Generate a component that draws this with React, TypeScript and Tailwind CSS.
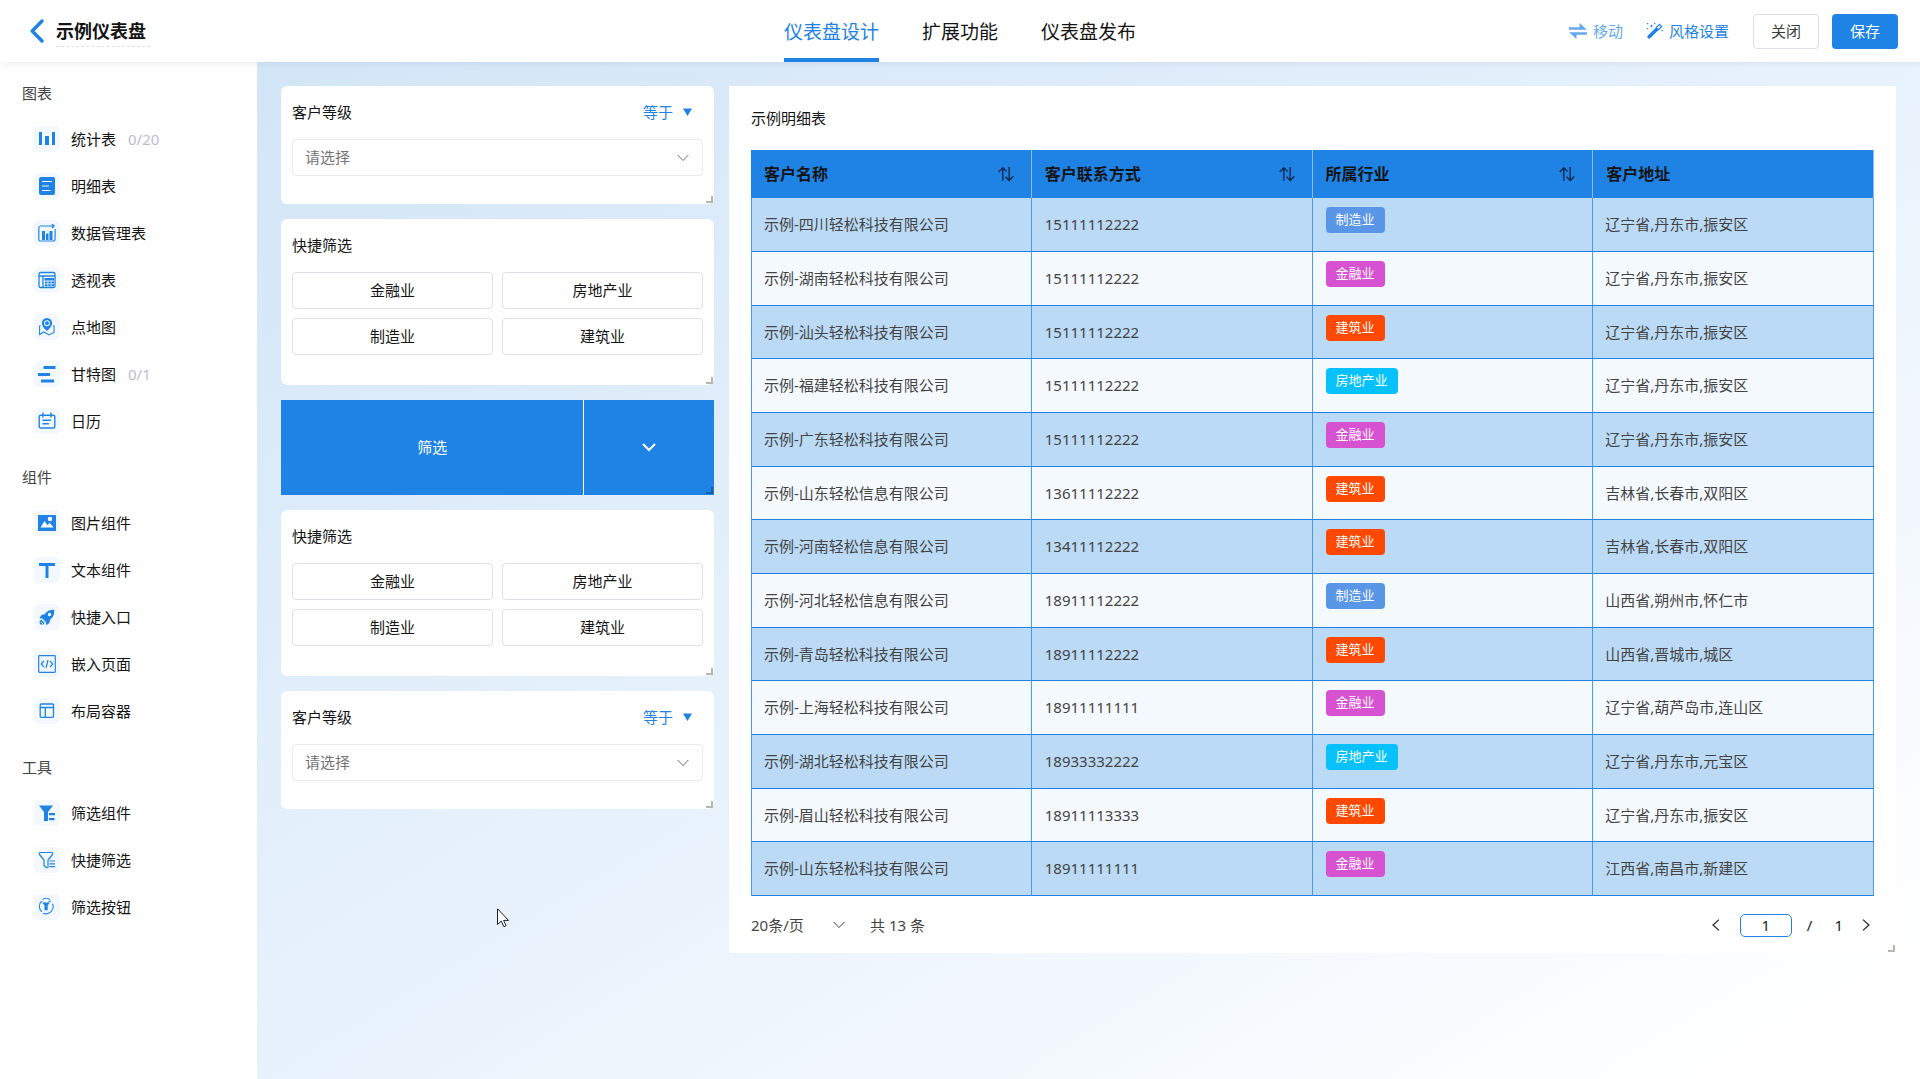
import React from 'react';

const svgProps = {
  viewBox: '0 0 18 18',
  fill: 'none',
  className: 'size-[18px]',
  'aria-hidden': true,
} as const;

const StatIcon = () => (
  <svg {...svgProps}>
    <path fill="currentColor" d="M1 2h3v13H1zM7 6h4v9H7zM14 2h3v13h-3z" />
  </svg>
);

const DetailIcon = () => (
  <svg {...svgProps}>
    <rect x="1" y="0" width="16" height="18" rx="2" fill="currentColor" />
    <path stroke="#fff" strokeWidth="1.2" strokeLinecap="round" d="M4.5 4.5h9M4.5 9h6M4.5 13.5h7.5" />
  </svg>
);

const DataIcon = () => (
  <svg {...svgProps} stroke="currentColor" strokeWidth="1.2">
    <path d="M12.5 2H2.5A1.8 1.8 0 0 0 .8 3.800v11.400A1.800 1.800 0 0 0 2.600 17h12.800a1.800 1.800 0 0 0 1.700-1.800V5" />
    <path d="M12 2h4M13.800-.2 16.200 2l-2.400 2.200" />
    <path fill="currentColor" stroke="none" d="M4 7h3v9H4zM8 9.500h2.500V16H8zM11.500 7h3v9h-3z" />
  </svg>
);

const PivotIcon = () => (
  <svg {...svgProps} stroke="currentColor" strokeWidth="1.3">
    <rect x="1" y="1.500" width="16" height="15" rx="1.500" />
    <path d="M1 5h16M5 5v11" />
    <path fill="currentColor" stroke="none" d="M6.500 7h9.500v2.500H6.500zM7 10.500h2.500v2H7zM10.300 10.500h2.500v2h-2.500zM13.500 10.500H16v2h-2.500zM7 13.300h2.500v1.900H7zM10.300 13.300h2.500v1.900h-2.500zM13.500 13.300H16v1.900h-2.500z" />
  </svg>
);

const MapIcon = () => (
  <svg {...svgProps}>
    <path fill="currentColor" fillRule="evenodd" d="M9 0a5.200 5.200 0 0 1 5.200 5.200C14.200 8.500 9 13 9 13S3.800 8.500 3.800 5.200A5.200 5.200 0 0 1 9 0zm0 2.200a3 3 0 1 0 0 6 3 3 0 0 0 0-6z" />
    <circle cx="9" cy="5.200" r="1.900" fill="currentColor" />
    <path stroke="currentColor" strokeWidth="1.100" d="M2.500 7.500 1.600 8v8.500L5.800 14l5.200 3 5-2.500V7.800l-1 .2" />
  </svg>
);

const GanttIcon = () => (
  <svg {...svgProps}>
    <path fill="currentColor" d="M5.500 1h12v3h-12zM0 8h12v3H0zM3 14.500h13v3H3z" />
  </svg>
);

const CalendarIcon = () => (
  <svg {...svgProps} stroke="currentColor" strokeWidth="1.400" strokeLinecap="round">
    <rect x="1.200" y="3.200" width="15.600" height="12.800" rx="1.600" />
    <path d="M5 1v4M13 1v4M5 8.200h7.500M5 11.800h5.500" />
  </svg>
);

const ImageIcon = () => (
  <svg {...svgProps}>
    <path fill="currentColor" d="M0 1h18v16H0z" />
    <path fill="#fff" d="m2.500 13.500 4-6.500 3 4.200 2.200-2.400 3.800 4.700z" />
    <circle cx="12" cy="5" r="2.200" fill="#fff" />
  </svg>
);

const TextIcon = () => (
  <svg {...svgProps}>
    <path fill="currentColor" d="M1 2h16v3h-6.500v12h-3V5H1z" />
  </svg>
);

const RocketIcon = () => (
  <svg {...svgProps}>
    <path
      fill="currentColor"
      fillRule="evenodd"
      d="M16.200 1.800C12 1.600 9 3 6.600 6.200L3.500 7 1.400 10.200l3 .4 3.400 3.400.5 3.200 3.100-2.200.8-3.200c3.100-2.300 4.400-5.600 4-10zM11.500 4.800a1.700 1.700 0 1 1 0 3.400 1.700 1.700 0 0 1 0-3.400z"
    />
    <path fill="currentColor" d="M3.400 11.500 1.800 13.200v2.800l.6.600h3l1.300-1.600z" />
    <path stroke="#f2f8fe" d="m3 14 2 2" />
  </svg>
);

const EmbedIcon = () => (
  <svg {...svgProps} stroke="currentColor" strokeWidth="1.200">
    <rect x=".7" y=".7" width="16.600" height="16.600" rx=".8" />
    <path d="M6 6 3.200 9 6 12M12 6l2.800 3-2.800 3M10 5l-2 8" />
  </svg>
);

const LayoutIcon = () => (
  <svg {...svgProps} stroke="currentColor" strokeWidth="1.300">
    <rect x="2.200" y="2" width="13.300" height="13.300" rx="1" />
    <path d="M2 5.500h13.500M7.300 5.500v10" />
  </svg>
);

const FilterSolidIcon = () => (
  <svg {...svgProps}>
    <path fill="currentColor" d="M1 1.500h14l-5 6.500v9H6V8zM11 9h6v2.200h-6zM11 14h5.500v2.200H11z" />
  </svg>
);

const FilterLineIcon = () => (
  <svg {...svgProps} stroke="currentColor" strokeWidth="1.200">
    <path strokeLinejoin="round" d="M9 17.200 6 14.500V9L1.500 3.500c-.6-1.200-.2-2 .8-2h11.400c1 0 1.400.8.8 2L10 9v8" />
    <path d="M11.500 10H17M11.500 12.800H17M11.500 15.600H17" />
  </svg>
);

const FilterButtonIcon = () => (
  <svg {...svgProps} stroke="currentColor" strokeWidth="1.100">
    <path d="M4 3a6.800 6.800 0 0 0 0 10.800M5 15.200a7.200 7.200 0 0 0 9.500-9.500M4.500 1.500a7 7 0 0 1 7.500 0M10.500 3.500 13 3" />
    <path fill="currentColor" stroke="none" d="M4 4.500h8l-2.300 3v4.700H6.500V7.500z" />
  </svg>
);

const groups = [
  {
    title: '图表',
    items: [
      { label: '统计表', count: '0/20', Icon: StatIcon },
      { label: '明细表', Icon: DetailIcon },
      { label: '数据管理表', Icon: DataIcon },
      { label: '透视表', Icon: PivotIcon },
      { label: '点地图', Icon: MapIcon },
      { label: '甘特图', count: '0/1', Icon: GanttIcon },
      { label: '日历', Icon: CalendarIcon },
    ],
  },
  {
    title: '组件',
    items: [
      { label: '图片组件', Icon: ImageIcon },
      { label: '文本组件', Icon: TextIcon },
      { label: '快捷入口', Icon: RocketIcon },
      { label: '嵌入页面', Icon: EmbedIcon },
      { label: '布局容器', Icon: LayoutIcon },
    ],
  },
  {
    title: '工具',
    items: [
      { label: '筛选组件', Icon: FilterSolidIcon },
      { label: '快捷筛选', Icon: FilterLineIcon },
      { label: '筛选按钮', Icon: FilterButtonIcon },
    ],
  },
];

const tagColors: Record<string, string> = {
  制造业: 'bg-[#5996e8]',
  金融业: 'bg-[#d752d0]',
  建筑业: 'bg-[#ff4800]',
  房地产业: 'bg-[#06c1fa]',
};

const rows = [
  ['示例-四川轻松科技有限公司', '15111112222', '制造业', '辽宁省,丹东市,振安区'],
  ['示例-湖南轻松科技有限公司', '15111112222', '金融业', '辽宁省,丹东市,振安区'],
  ['示例-汕头轻松科技有限公司', '15111112222', '建筑业', '辽宁省,丹东市,振安区'],
  ['示例-福建轻松科技有限公司', '15111112222', '房地产业', '辽宁省,丹东市,振安区'],
  ['示例-广东轻松科技有限公司', '15111112222', '金融业', '辽宁省,丹东市,振安区'],
  ['示例-山东轻松信息有限公司', '13611112222', '建筑业', '吉林省,长春市,双阳区'],
  ['示例-河南轻松信息有限公司', '13411112222', '建筑业', '吉林省,长春市,双阳区'],
  ['示例-河北轻松信息有限公司', '18911112222', '制造业', '山西省,朔州市,怀仁市'],
  ['示例-青岛轻松科技有限公司', '18911112222', '建筑业', '山西省,晋城市,城区'],
  ['示例-上海轻松科技有限公司', '18911111111', '金融业', '辽宁省,葫芦岛市,连山区'],
  ['示例-湖北轻松科技有限公司', '18933332222', '房地产业', '辽宁省,丹东市,元宝区'],
  ['示例-眉山轻松科技有限公司', '18911113333', '建筑业', '辽宁省,丹东市,振安区'],
  ['示例-山东轻松科技有限公司', '18911111111', '金融业', '江西省,南昌市,新建区'],
];

const columns = ['客户名称', '客户联系方式', '所属行业', '客户地址'];

function ResizeHandle({ dark = false }: { dark?: boolean }) {
  return (
    <span
      className={
        dark
          ? 'absolute right-px bottom-px size-[7px] border-r-2 border-b-2 border-[#165fa6]'
          : 'absolute right-px bottom-px size-[7px] border-r-2 border-b-2 border-[#b5b9ab]'
      }
    />
  );
}

function Chevron({ className }: { className: string }) {
  return (
    <svg viewBox="0 0 12 8" fill="none" stroke="currentColor" className={className} aria-hidden>
      <path d="m.7 1 5.300 5.500L11.300 1" />
    </svg>
  );
}

function Header() {
  return (
    <header className="relative z-10 grid h-[62px] shrink-0 grid-cols-[1fr_auto_1fr] bg-white shadow-[0_1px_6px_rgba(0,40,90,0.08)]">
      <div className="flex items-center pl-[30px]">
        <button type="button" aria-label="返回" className="text-[#1e83e4]">
          <svg viewBox="0 0 14 24" fill="none" stroke="currentColor" strokeWidth="3.400" strokeLinecap="round" strokeLinejoin="round" className="h-6 w-3.5" aria-hidden>
            <path d="M12 2 2.200 12 12 22" />
          </svg>
        </button>
        <h1 className="ml-3 border-b border-dashed border-[#dcdfe6] pr-1 text-lg leading-[30px] font-bold text-[#141414]">示例仪表盘</h1>
      </div>
      <nav className="flex gap-[43px] text-[19px] text-[#141414]">
        <a href="#design" aria-current="page" className="flex items-center border-b-4 border-[#1e83e4] pt-1.5 text-[#1e83e4]">
          仪表盘设计
        </a>
        <a href="#extend" className="flex items-center border-b-4 border-transparent pt-1.5">
          扩展功能
        </a>
        <a href="#publish" className="flex items-center border-b-4 border-transparent pt-1.5">
          仪表盘发布
        </a>
      </nav>
      <div className="flex items-center justify-end pr-[22px] text-[#1e83e4]">
        <button type="button" className="flex items-center gap-1.5 text-[#62a9ee]">
          <svg viewBox="0 0 18 16" fill="currentColor" className="h-4 w-[18px]" aria-hidden>
            <path d="M0 4.200h10.500V0L18 6.800H0zM18 11.800H7.500V16L0 9.200h18z" />
          </svg>
          移动
        </button>
        <button type="button" className="ml-6 flex items-center gap-1.5">
          <svg viewBox="0 0 16 16" fill="none" className="size-4" aria-hidden>
            <path stroke="currentColor" strokeWidth="3.600" strokeLinecap="round" d="M2.200 13.800 9.500 6.500" />
            <path stroke="currentColor" strokeWidth="1.200" d="m9 4.800 3.600-3.400 2 2L11.200 7" />
            <path fill="currentColor" d="M4.500 1.200 5 2.500l1.300.5-1.300.5-.5 1.300L4 3.500 2.700 3 4 2.500zM0 0h1.300v1.300H0zM7 0h1.300v1.300H7zM14.500 7h1.300v1.300h-1.300zM0 5h1.200v1.200H0z" />
          </svg>
          风格设置
        </button>
        <button type="button" className="ml-6 h-[35px] w-[66px] rounded border border-[#dcdce6] bg-white text-[#3c3c3c]">
          关闭
        </button>
        <button type="button" className="ml-[13px] h-[35px] w-[66px] rounded bg-[#1e83e4] text-white">
          保存
        </button>
      </div>
    </header>
  );
}

function Sidebar() {
  return (
    <aside className="flex w-[257px] shrink-0 flex-col gap-[31px] bg-[#fefefe] pt-[19px]">
      {groups.map((group) => (
        <section key={group.title}>
          <h2 className="pl-[22px] leading-6 text-[#444]">{group.title}</h2>
          <ul className="mt-[21px] flex flex-col gap-[21px] pl-[34px]">
            {group.items.map(({ label, Icon, ...rest }) => (
              <li key={label}>
                <button type="button" className="flex h-[26px] items-center text-[#141414]">
                  <span className="flex size-[26px] items-center justify-center rounded-md bg-[#f2f8fe] text-[#1e83e4]">
                    <Icon />
                  </span>
                  <span className="ml-[11px]">{label}</span>
                  {'count' in rest && <span className="ml-3 text-[#bfbccd]">{rest.count}</span>}
                </button>
              </li>
            ))}
          </ul>
        </section>
      ))}
    </aside>
  );
}

function LevelFilter({ id }: { id: string }) {
  return (
    <section className="relative rounded-md bg-white px-[11px] pt-[15px] pb-7">
      <div className="flex items-center justify-between">
        <label htmlFor={id} className="leading-[22px] text-[#141414]">
          客户等级
        </label>
        <div className="mr-[11px] flex items-center text-[#1e83e4]">
          <select aria-label="条件" className="appearance-none bg-transparent leading-[22px]">
            <option>等于</option>
          </select>
          <svg viewBox="0 0 9 8" fill="currentColor" className="ml-[9px] h-2 w-[9px]" aria-hidden>
            <path d="M0 .5h9L4.500 8z" />
          </svg>
        </div>
      </div>
      <div className="mt-4 grid items-center">
        <select
          id={id}
          className="col-start-1 row-start-1 h-[37px] w-full appearance-none rounded border border-[#ebebee] bg-[#fefefe] px-3 text-[#757575]"
        >
          <option>请选择</option>
        </select>
        <Chevron className="pointer-events-none col-start-1 row-start-1 mr-3.5 h-2 w-3 justify-self-end text-[#6b6b78]" />
      </div>
      <ResizeHandle />
    </section>
  );
}

function QuickFilter() {
  return (
    <section className="relative rounded-md bg-white px-[11px] pt-[15px] pb-[30px]">
      <h3 className="leading-[22px] text-[#141414]">快捷筛选</h3>
      <div className="mt-4 grid grid-cols-2 gap-[9px]">
        {['金融业', '房地产业', '制造业', '建筑业'].map((name) => (
          <button key={name} type="button" className="h-[37px] rounded border border-[#dfdfe8] text-[#141414]">
            {name}
          </button>
        ))}
      </div>
      <ResizeHandle />
    </section>
  );
}

function FilterAction() {
  return (
    <div className="relative flex h-[95px] bg-[#1e83e4] text-white">
      <button type="button" className="flex-[7] border-r border-white">
        筛选
      </button>
      <button type="button" aria-label="展开" className="flex flex-[3] items-center justify-center">
        <svg viewBox="0 0 14 9" fill="none" stroke="currentColor" strokeWidth="2" className="h-[9px] w-3.5" aria-hidden>
          <path d="m1 1 6 6 6-6" />
        </svg>
      </button>
      <ResizeHandle dark />
    </div>
  );
}

function SortIcon() {
  return (
    <svg viewBox="0 0 16 16" fill="none" stroke="#12294d" strokeWidth="1.400" className="size-4" aria-hidden>
      <path d="M.7 6 4.800 1.700 8.500 5.500M4.800 2v12.800" />
      <path d="m7.500 10.800 3.700 3.700 4.100-4.200M11.200 14.200V1" />
    </svg>
  );
}

function DetailTable() {
  return (
    <section className="relative self-start bg-white px-[22px] pt-5 pb-4">
      <h2 className="leading-6 text-[#141414]">示例明细表</h2>
      <table className="mt-5 w-full table-fixed border-separate border-spacing-0 text-left">
        <thead>
          <tr className="h-12 bg-[#1e83e4]">
            {columns.map((name, i) => (
              <th key={name} scope="col" className="border-r border-[#8dbdf0] p-0 pr-[17px] pl-[13px] text-[#141414]">
                <div className="flex items-center justify-between">
                  <span className="text-base font-bold">{name}</span>
                  {i < 3 && (
                    <button type="button" aria-label={`按${name}排序`}>
                      <SortIcon />
                    </button>
                  )}
                </div>
              </th>
            ))}
          </tr>
        </thead>
        <tbody>
          {rows.map(([name, phone, industry, address], i) => (
            <tr key={i} className="h-[54px] text-[#444] odd:bg-[#badaf6] even:bg-[#f4f9fe] nth-[3n]:h-[53px]">
              <td className="border-r border-b border-l border-[#1e83e4] border-r-[#4a9bea] border-l-[#4a9bea] p-0 pl-3">{name}</td>
              <td className="border-r border-b border-[#1e83e4] border-r-[#4a9bea] p-0 pl-[13px]">{phone}</td>
              <td className="border-r border-b border-[#1e83e4] border-r-[#4a9bea] p-0 pt-[9px] pl-[13px] align-top">
                <span className={`flex h-[26px] w-fit items-center rounded px-2.5 text-[13px] text-white ${tagColors[industry]}`}>
                  {industry}
                </span>
              </td>
              <td className="border-r border-b border-[#1e83e4] border-r-[#4a9bea] p-0 pl-3">{address}</td>
            </tr>
          ))}
        </tbody>
      </table>
      <div className="mt-[17px] flex h-6 items-center justify-between text-[#444]">
        <div className="flex items-center">
          <div className="grid w-[94px] items-center">
            <select aria-label="每页条数" className="col-start-1 row-start-1 appearance-none bg-transparent">
              <option>20条/页</option>
            </select>
            <Chevron className="pointer-events-none col-start-1 row-start-1 h-2 w-3 justify-self-end" />
          </div>
          <span className="ml-[25px]">共 13 条</span>
        </div>
        <div className="flex items-center pr-1 text-[#222]">
          <button type="button" aria-label="上一页">
            <svg viewBox="0 0 8 12" fill="none" stroke="currentColor" strokeWidth="1.200" className="h-3 w-2" aria-hidden>
              <path d="M7 .6 1 6l6 5.400" />
            </svg>
          </button>
          <input
            type="text"
            aria-label="页码"
            defaultValue="1"
            className="ml-5 h-[23px] w-[52px] rounded-[5px] border border-[#1e83e4] bg-white text-center outline-none"
          />
          <span className="ml-[15px]">/</span>
          <span className="ml-[22px]">1</span>
          <button type="button" aria-label="下一页" className="ml-[19px]">
            <svg viewBox="0 0 8 12" fill="none" stroke="currentColor" strokeWidth="1.200" className="h-3 w-2" aria-hidden>
              <path d="m1 .6 6 5.400-6 5.400" />
            </svg>
          </button>
        </div>
      </div>
      <ResizeHandle />
    </section>
  );
}

export default function App() {
  return (
    <div className="flex min-h-screen flex-col bg-white font-['Noto_Sans','Noto_Sans_CJK_SC',sans-serif] text-[15px]">
      <Header />
      <div className="flex flex-1">
        <Sidebar />
        <main className="relative grid flex-1 grid-cols-[433fr_1167fr] gap-[15px] bg-linear-to-br from-[#d2e5f7] via-[#e8f2fc] to-[#ffffff] to-95% p-6">
          <div className="flex flex-col gap-[15px]">
            <LevelFilter id="level-top" />
            <QuickFilter />
            <FilterAction />
            <QuickFilter />
            <LevelFilter id="level-bottom" />
          </div>
          <DetailTable />
          <svg viewBox="0 0 13 20" className="pointer-events-none absolute top-[846px] left-[240px] h-5 w-[13px]" aria-hidden>
            <path d="M.5.800v15.700l3.700-3.400 2.700 5.600 2.200-1-2.500-5.300h5z" fill="#fff" stroke="#1c1a2b" />
          </svg>
        </main>
      </div>
    </div>
  );
}
